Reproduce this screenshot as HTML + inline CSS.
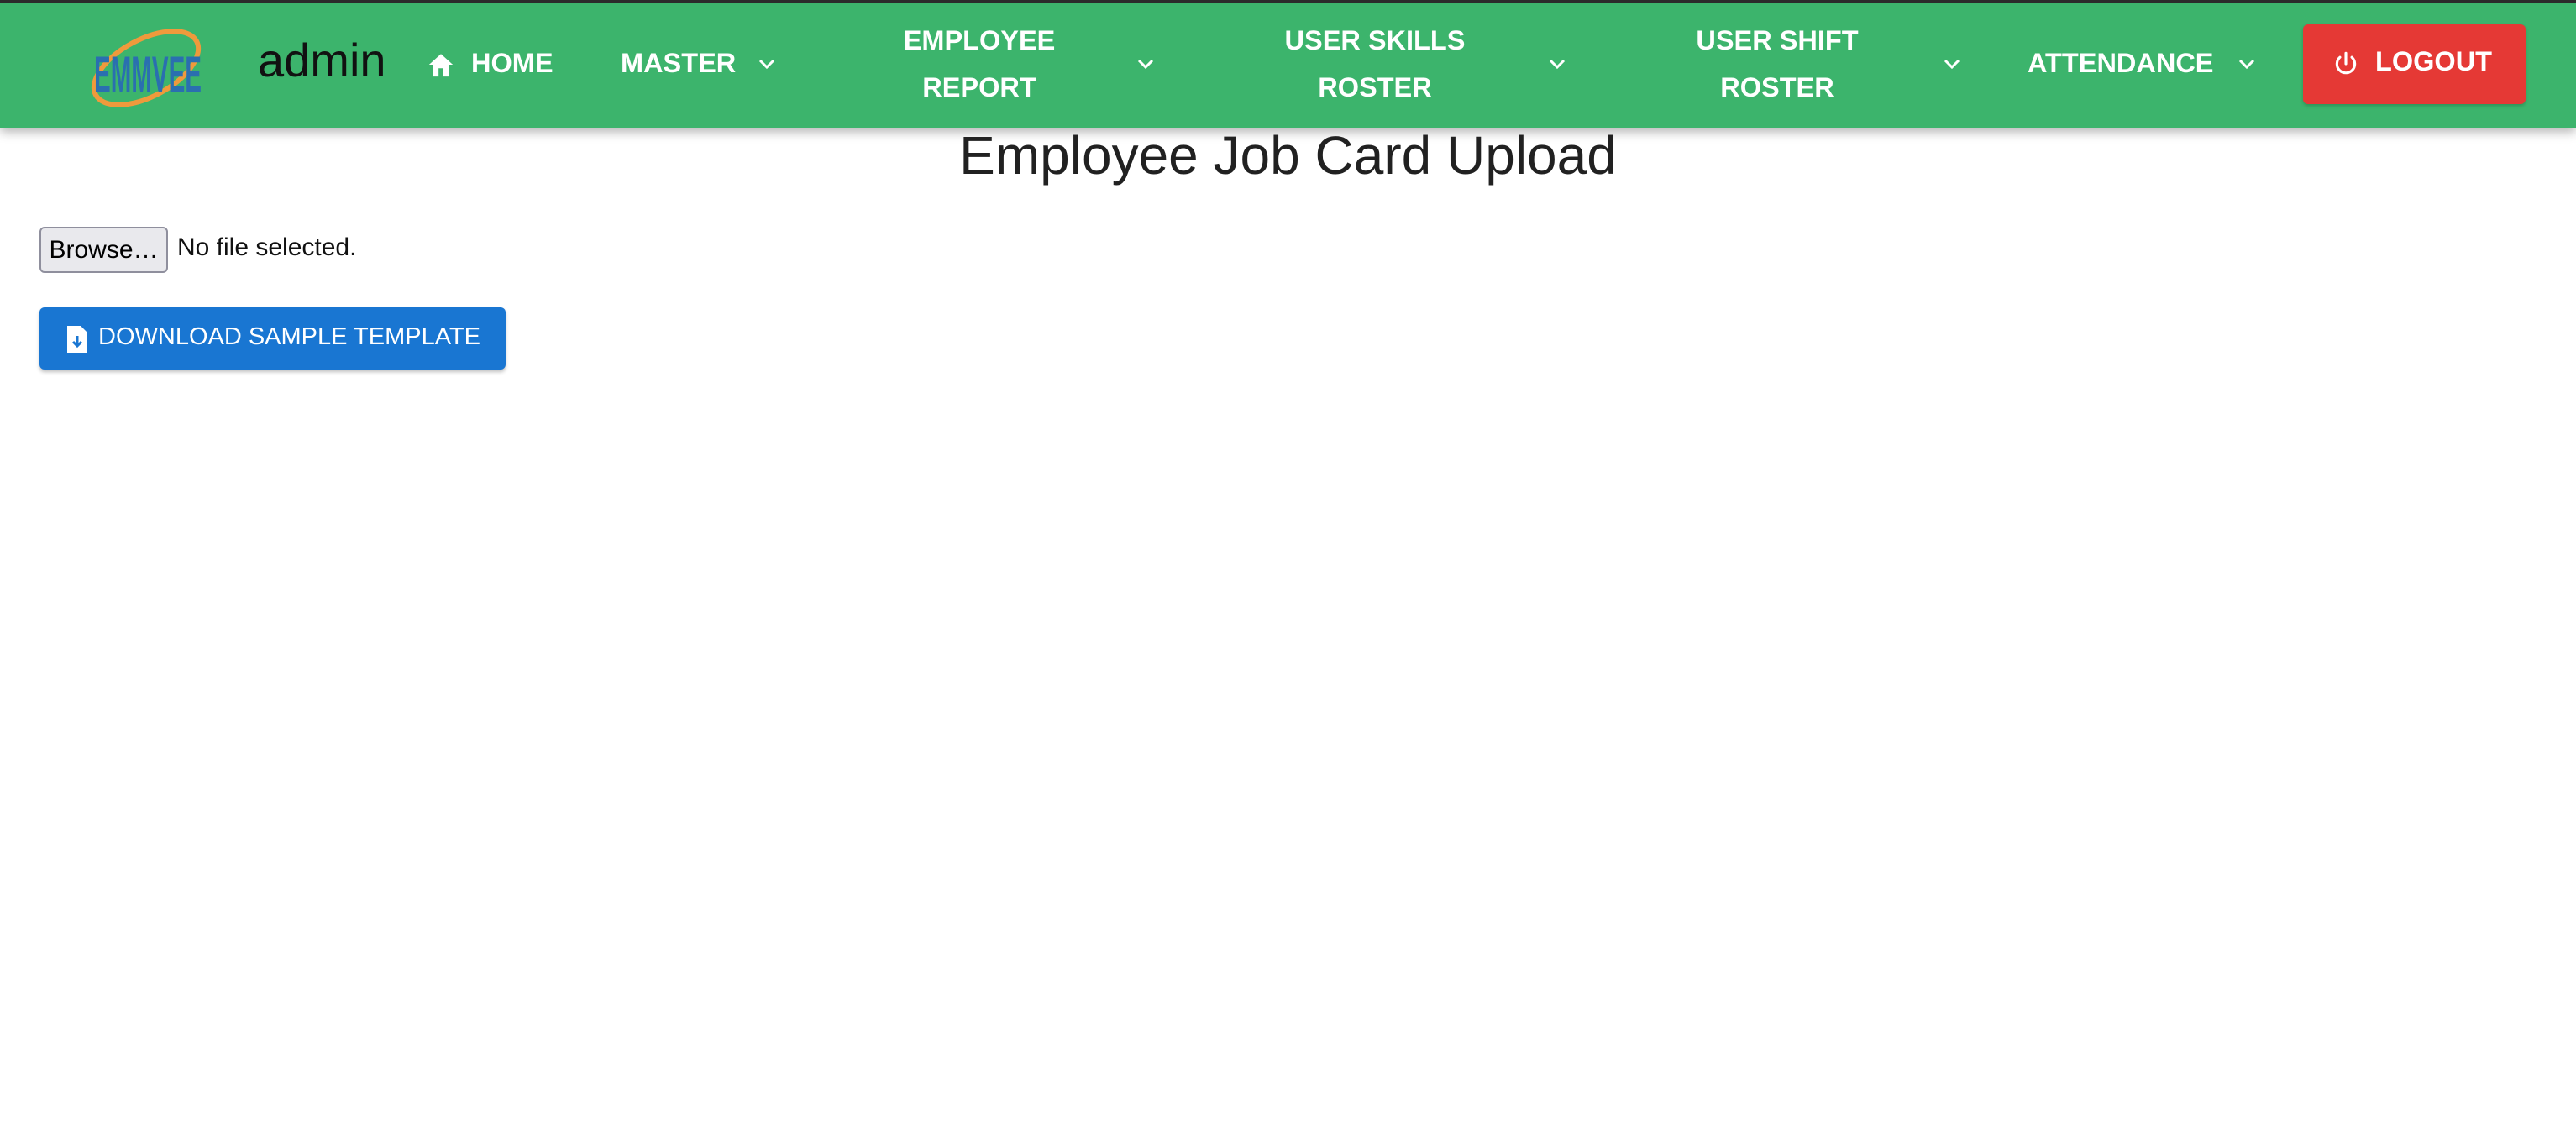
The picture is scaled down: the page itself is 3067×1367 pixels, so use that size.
<!DOCTYPE html>
<html><head><meta charset="utf-8"><style>
*{margin:0;padding:0;box-sizing:border-box}
body{width:3067px;height:1367px;background:#fff;font-family:"Liberation Sans",Arial,sans-serif;position:relative;overflow:hidden}
.hdr{position:absolute;left:0;top:0;width:3067px;height:153px;background:#3cb46c;border-top:3px solid #2b2b2b;box-shadow:0 4px 12px rgba(0,0,0,.3)}
.t{position:absolute;color:#fff;font-weight:bold;font-size:32.5px;white-space:nowrap}
.c{text-align:center;line-height:56px}
.chev{position:absolute;top:66px}
</style></head><body>
<div class="hdr">
<svg style="position:absolute;left:100px;top:28px" width="148" height="96" viewBox="0 0 148 96">
<ellipse cx="74" cy="50" rx="68" ry="34" transform="rotate(-28 74 50)" fill="none" stroke="#ef9a3c" stroke-width="6"/>
<text x="12" y="78" font-family="Liberation Sans" font-weight="bold" font-size="60" fill="#2a6fb0" textLength="128" lengthAdjust="spacingAndGlyphs">EMMVEE</text>
</svg>
<div style="position:absolute;left:307px;top:36px;font-size:56px;color:#111">admin</div>
<svg style="position:absolute;left:508px;top:58px" width="34" height="32" viewBox="0 0 24 22"><path d="M10 21v-7h4v7h5v-10h3L12 2 2 11h3v10z" fill="#fff"/></svg>
<div class="t" style="left:561px;top:54px">HOME</div>
<div class="t" style="left:739px;top:54px">MASTER</div>
<svg class="chev" style="left:902px" width="22" height="16" viewBox="0 0 22 16"><path d="M3 3l8 8 8-8" stroke="#fff" stroke-width="3" fill="none"/></svg>
<div class="t c" style="left:1016px;top:17px;width:300px">EMPLOYEE<br>REPORT</div>
<svg class="chev" style="left:1353px" width="22" height="16" viewBox="0 0 22 16"><path d="M3 3l8 8 8-8" stroke="#fff" stroke-width="3" fill="none"/></svg>
<div class="t c" style="left:1487px;top:17px;width:300px">USER SKILLS<br>ROSTER</div>
<svg class="chev" style="left:1843px" width="22" height="16" viewBox="0 0 22 16"><path d="M3 3l8 8 8-8" stroke="#fff" stroke-width="3" fill="none"/></svg>
<div class="t c" style="left:1966px;top:17px;width:300px">USER SHIFT<br>ROSTER</div>
<svg class="chev" style="left:2313px" width="22" height="16" viewBox="0 0 22 16"><path d="M3 3l8 8 8-8" stroke="#fff" stroke-width="3" fill="none"/></svg>
<div class="t" style="left:2414px;top:54px">ATTENDANCE</div>
<svg class="chev" style="left:2664px" width="22" height="16" viewBox="0 0 22 16"><path d="M3 3l8 8 8-8" stroke="#fff" stroke-width="3" fill="none"/></svg>
<div style="position:absolute;left:2742px;top:26px;width:265px;height:95px;background:#e53935;border-radius:6px;box-shadow:0 2px 4px rgba(0,0,0,.2)">
<svg style="position:absolute;left:34px;top:29px" width="34" height="36" viewBox="0 0 24 24"><path d="M12 3v9M7 6.5a7.5 7.5 0 1 0 10 0" stroke="#fff" stroke-width="2.2" fill="none" stroke-linecap="round"/></svg>
<div class="t" style="left:86px;top:26px">LOGOUT</div>
</div>
</div>
<div style="position:absolute;left:0;width:3067px;top:148px;text-align:center;font-size:64px;color:#212121">Employee Job Card Upload</div>
<div style="position:absolute;left:47px;top:270px;width:153px;height:55px;background:#e9e9ed;border:2px solid #8f8f9d;border-radius:6px;font-size:30px;line-height:51px;text-align:center;color:#000">Browse…</div>
<div style="position:absolute;left:211px;top:278px;font-size:30px;color:#111">No file selected.</div>
<div style="position:absolute;left:47px;top:366px;width:555px;height:74px;background:#1976d2;border-radius:6px;box-shadow:0 3px 4px rgba(0,0,0,.25)">
<svg style="position:absolute;left:33px;top:22px" width="24" height="32" viewBox="0 0 12 16"><path d="M0 0h8l4 4v12H0z" fill="#fff"/><path d="M6 6v6M3.5 9.5L6 12l2.5-2.5" stroke="#1976d2" stroke-width="1.5" fill="none"/></svg>
<div style="position:absolute;left:70px;top:19px;font-size:29px;color:#fff;white-space:nowrap">DOWNLOAD SAMPLE TEMPLATE</div>
</div>
</body></html>
